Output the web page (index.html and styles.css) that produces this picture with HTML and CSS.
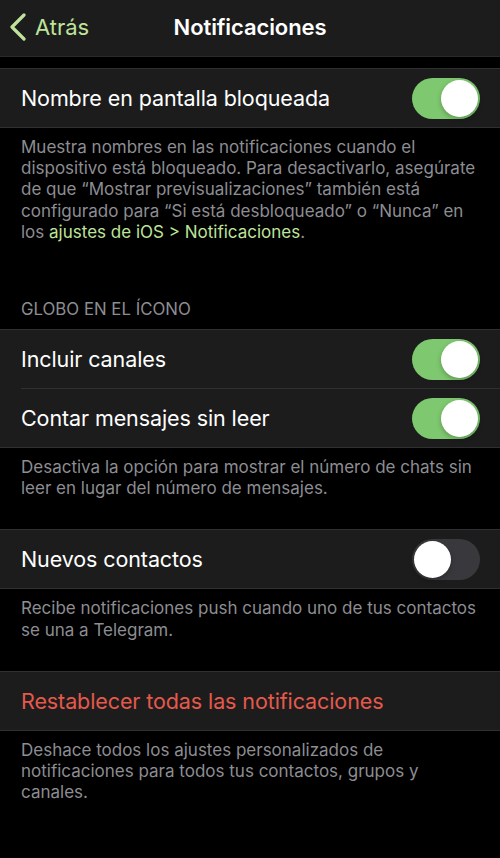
FILE: index.html
```html
<!DOCTYPE html>
<html lang="es">
<head>
    <meta charset="UTF-8">
    <title>Notificaciones</title>
    <link rel="stylesheet" href="styles.css">
</head>
<body>
<div class="nav">
    <a class="back" href="javascript:;">
        <svg width="18" height="28" viewBox="0 0 18 28"><path d="M15 2 L3 14 L15 26" fill="none" stroke="#bfe39a" stroke-width="3.2" stroke-linecap="round" stroke-linejoin="round"/></svg>
        <span>Atrás</span>
    </a>
    <h1>Notificaciones</h1>
</div>

<div class="group first">
    <div class="row">
        <span>Nombre en pantalla bloqueada</span>
        <i class="switch on"></i>
    </div>
</div>
<p class="note">Muestra nombres en las notificaciones cuando el dispositivo está bloqueado. Para desactivarlo, asegúrate de que “Mostrar previsualizaciones” también está configurado para “Si está desbloqueado” o “Nunca” en los <a href="javascript:;">ajustes de iOS &gt; Notificaciones</a>.</p>

<div class="caption">GLOBO EN EL ÍCONO</div>
<div class="group">
    <div class="row">
        <span>Incluir canales</span>
        <i class="switch on"></i>
    </div>
    <div class="row">
        <span>Contar mensajes sin leer</span>
        <i class="switch on"></i>
    </div>
</div>
<p class="note">Desactiva la opción para mostrar el número de chats sin leer en lugar del número de mensajes.</p>

<div class="group">
    <div class="row">
        <span>Nuevos contactos</span>
        <i class="switch"></i>
    </div>
</div>
<p class="note">Recibe notificaciones push cuando uno de tus contactos se una a Telegram.</p>

<div class="group">
    <div class="row danger">
        <span>Restablecer todas las notificaciones</span>
    </div>
</div>
<p class="note">Deshace todos los ajustes personalizados de notificaciones para todos tus contactos, grupos y canales.</p>
</body>
</html>
```

FILE: styles.css
```css
html, body{
    margin: 0;
    background: #000;
}
body{
    font-family: Inter, "Noto Sans", "Liberation Sans", sans-serif;
    color: #fff;
    height: 858px;
    overflow: hidden;
}
.nav{
    position: relative;
    height: 54px;
    padding-bottom: 2px;
    background: #1c1c1d;
    border-bottom: 1px solid #2a2a2c;
    display: flex;
    align-items: center;
    justify-content: center;
}
.nav h1{
    margin: 0;
    font-size: 22px;
    font-weight: 600;
    letter-spacing: -0.1px;
}
.back{
    position: absolute;
    left: 9px;
    top: 0;
    height: 54px;
    display: flex;
    align-items: center;
    gap: 8px;
    color: #bfe39a;
    text-decoration: none;
    font-size: 22px;
}
.group{
    background: #1c1c1d;
    border-top: 1px solid #303032;
    border-bottom: 1px solid #303032;
    margin-top: 30px;
}
.group.first{
    margin-top: 11px;
}
.caption + .group{
    margin-top: 0;
}
.row{
    height: 58px;
    padding: 0 20px 0 21px;
    display: flex;
    align-items: center;
    justify-content: space-between;
    font-size: 21.5px;
    letter-spacing: -0.1px;
}
.row + .row{
    border-top: 1px solid #303032;
    margin-left: 21px;
    padding-left: 0;
}
.row.danger{
    color: #e5594b;
}
.switch{
    display: block;
    width: 68px;
    height: 41px;
    border-radius: 21px;
    background: #39393d;
    position: relative;
}
.switch:after{
    content: "";
    position: absolute;
    top: 2px;
    left: 2px;
    width: 37px;
    height: 37px;
    border-radius: 50%;
    background: #fff;
    box-shadow: 0 2px 5px rgba(0,0,0,.25);
}
.switch.on{
    background: #7ec86f;
}
.switch.on:after{
    left: 29px;
}
.note{
    margin: 0;
    padding: 9px 21px 0;
    font-size: 17px;
    line-height: 21.2px;
    color: #8d8d92;
}
.note a{
    color: #bfe39a;
    text-decoration: none;
}
.caption{
    margin-top: 55px;
    padding: 0 21px 9px;
    font-size: 16.8px;
    line-height: 22px;
    color: #8d8d92;
}
```
